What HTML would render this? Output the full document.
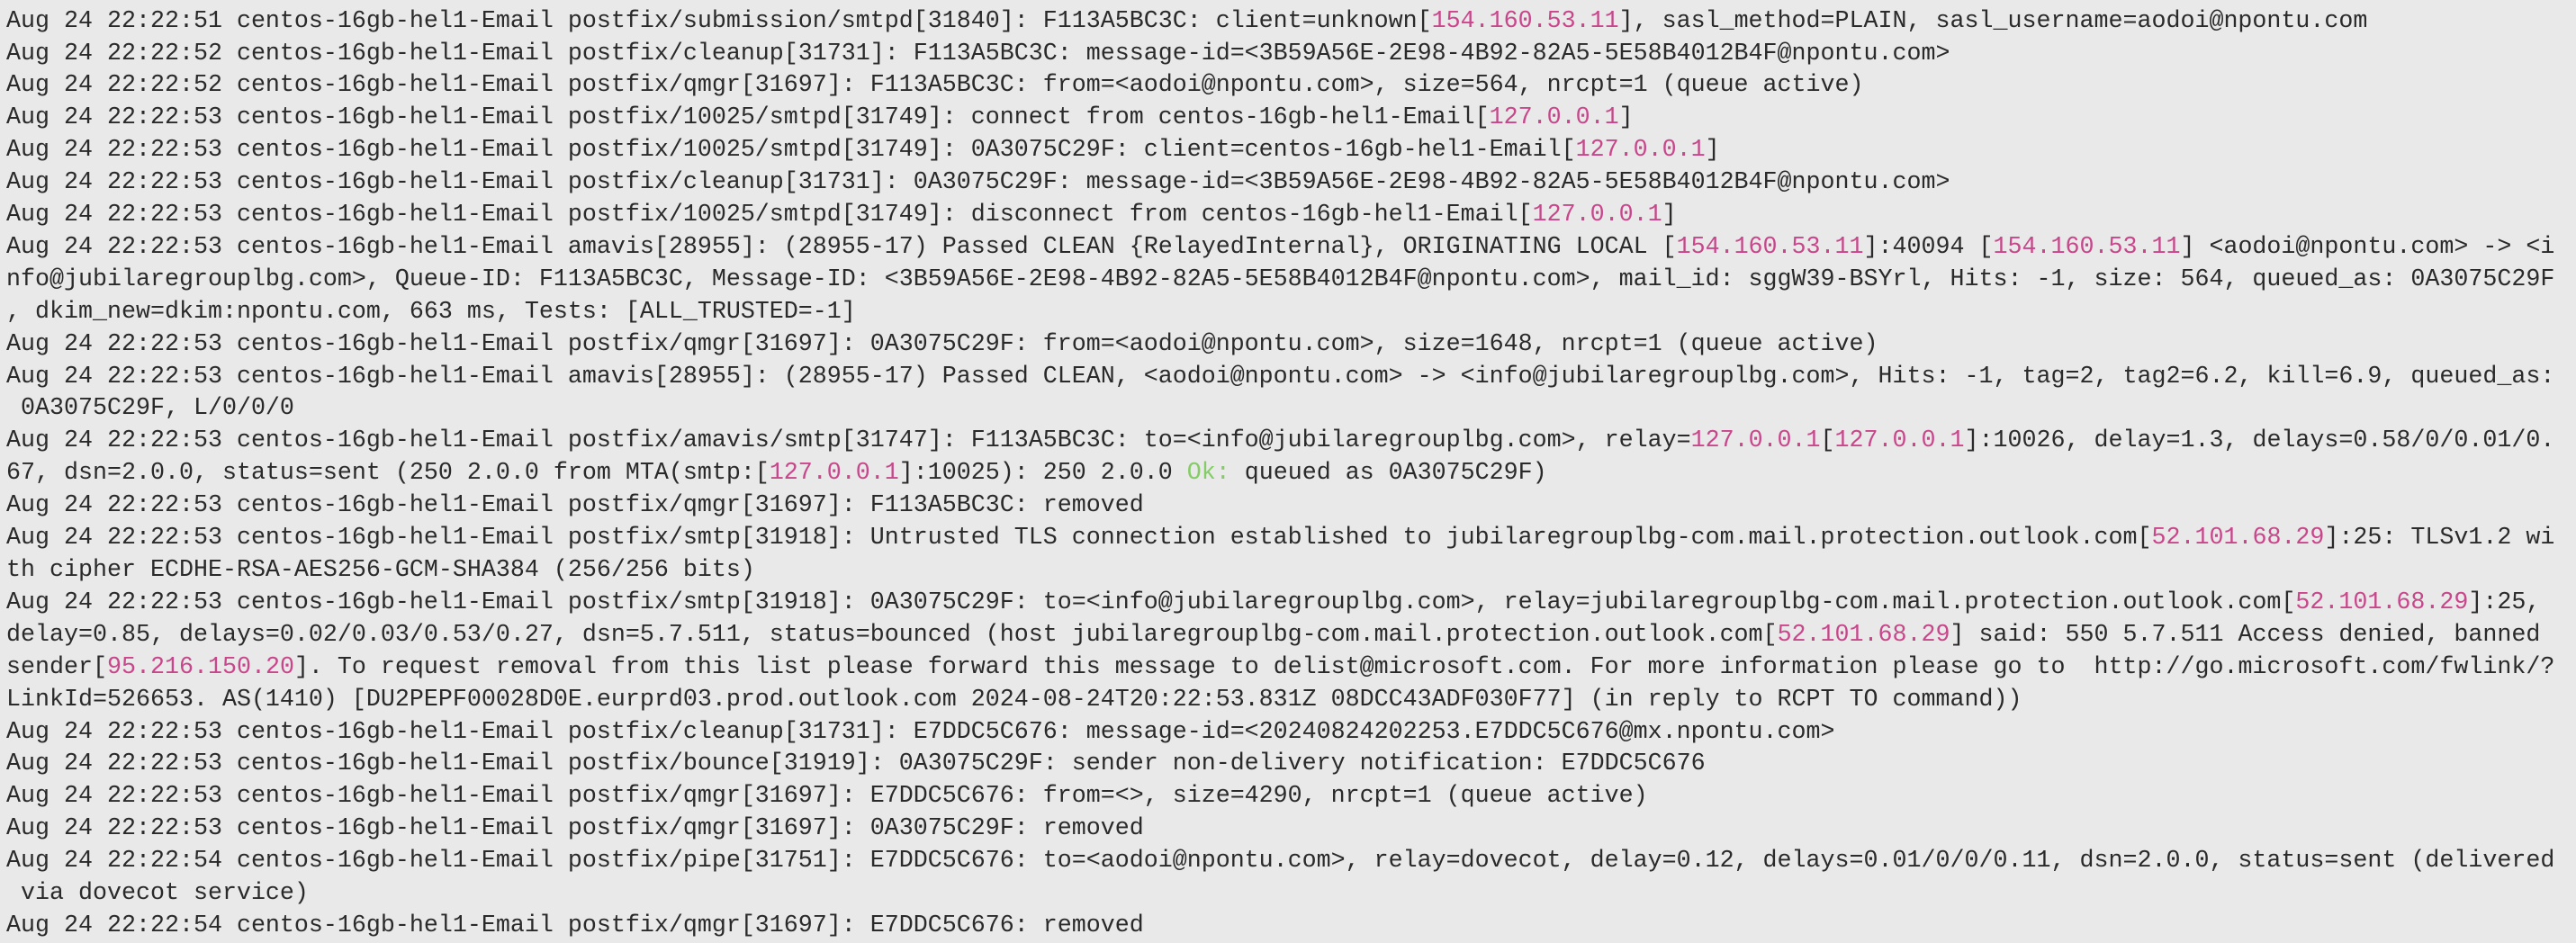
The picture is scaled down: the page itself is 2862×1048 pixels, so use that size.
<!DOCTYPE html>
<html><head><meta charset="utf-8"><style>
html,body{margin:0;padding:0;background:#e9e9e9;width:2862px;height:1048px;overflow:hidden}
pre{margin:0;padding:6.6px 0 0 7px;font-family:"Liberation Mono",monospace;font-size:26.667px;line-height:35.9px;color:#2a2a2a;white-space:pre}
.p{color:#c8468a}.g{color:#85cc68}
</style></head><body><pre>Aug 24 22:22:51 centos-16gb-hel1-Email postfix/submission/smtpd[31840]: F113A5BC3C: client=unknown[<span class="p">154.160.53.11</span>], sasl_method=PLAIN, sasl_username=aodoi@npontu.com
Aug 24 22:22:52 centos-16gb-hel1-Email postfix/cleanup[31731]: F113A5BC3C: message-id=&lt;3B59A56E-2E98-4B92-82A5-5E58B4012B4F@npontu.com&gt;
Aug 24 22:22:52 centos-16gb-hel1-Email postfix/qmgr[31697]: F113A5BC3C: from=&lt;aodoi@npontu.com&gt;, size=564, nrcpt=1 (queue active)
Aug 24 22:22:53 centos-16gb-hel1-Email postfix/10025/smtpd[31749]: connect from centos-16gb-hel1-Email[<span class="p">127.0.0.1</span>]
Aug 24 22:22:53 centos-16gb-hel1-Email postfix/10025/smtpd[31749]: 0A3075C29F: client=centos-16gb-hel1-Email[<span class="p">127.0.0.1</span>]
Aug 24 22:22:53 centos-16gb-hel1-Email postfix/cleanup[31731]: 0A3075C29F: message-id=&lt;3B59A56E-2E98-4B92-82A5-5E58B4012B4F@npontu.com&gt;
Aug 24 22:22:53 centos-16gb-hel1-Email postfix/10025/smtpd[31749]: disconnect from centos-16gb-hel1-Email[<span class="p">127.0.0.1</span>]
Aug 24 22:22:53 centos-16gb-hel1-Email amavis[28955]: (28955-17) Passed CLEAN {RelayedInternal}, ORIGINATING LOCAL [<span class="p">154.160.53.11</span>]:40094 [<span class="p">154.160.53.11</span>] &lt;aodoi@npontu.com&gt; -&gt; &lt;i
nfo@jubilaregrouplbg.com&gt;, Queue-ID: F113A5BC3C, Message-ID: &lt;3B59A56E-2E98-4B92-82A5-5E58B4012B4F@npontu.com&gt;, mail_id: sggW39-BSYrl, Hits: -1, size: 564, queued_as: 0A3075C29F
, dkim_new=dkim:npontu.com, 663 ms, Tests: [ALL_TRUSTED=-1]
Aug 24 22:22:53 centos-16gb-hel1-Email postfix/qmgr[31697]: 0A3075C29F: from=&lt;aodoi@npontu.com&gt;, size=1648, nrcpt=1 (queue active)
Aug 24 22:22:53 centos-16gb-hel1-Email amavis[28955]: (28955-17) Passed CLEAN, &lt;aodoi@npontu.com&gt; -&gt; &lt;info@jubilaregrouplbg.com&gt;, Hits: -1, tag=2, tag2=6.2, kill=6.9, queued_as:
 0A3075C29F, L/0/0/0
Aug 24 22:22:53 centos-16gb-hel1-Email postfix/amavis/smtp[31747]: F113A5BC3C: to=&lt;info@jubilaregrouplbg.com&gt;, relay=<span class="p">127.0.0.1</span>[<span class="p">127.0.0.1</span>]:10026, delay=1.3, delays=0.58/0/0.01/0.
67, dsn=2.0.0, status=sent (250 2.0.0 from MTA(smtp:[<span class="p">127.0.0.1</span>]:10025): 250 2.0.0 <span class="g">Ok:</span> queued as 0A3075C29F)
Aug 24 22:22:53 centos-16gb-hel1-Email postfix/qmgr[31697]: F113A5BC3C: removed
Aug 24 22:22:53 centos-16gb-hel1-Email postfix/smtp[31918]: Untrusted TLS connection established to jubilaregrouplbg-com.mail.protection.outlook.com[<span class="p">52.101.68.29</span>]:25: TLSv1.2 wi
th cipher ECDHE-RSA-AES256-GCM-SHA384 (256/256 bits)
Aug 24 22:22:53 centos-16gb-hel1-Email postfix/smtp[31918]: 0A3075C29F: to=&lt;info@jubilaregrouplbg.com&gt;, relay=jubilaregrouplbg-com.mail.protection.outlook.com[<span class="p">52.101.68.29</span>]:25,
delay=0.85, delays=0.02/0.03/0.53/0.27, dsn=5.7.511, status=bounced (host jubilaregrouplbg-com.mail.protection.outlook.com[<span class="p">52.101.68.29</span>] said: 550 5.7.511 Access denied, banned
sender[<span class="p">95.216.150.20</span>]. To request removal from this list please forward this message to delist@microsoft.com. For more information please go to  http://go.microsoft.com/fwlink/?
LinkId=526653. AS(1410) [DU2PEPF00028D0E.eurprd03.prod.outlook.com 2024-08-24T20:22:53.831Z 08DCC43ADF030F77] (in reply to RCPT TO command))
Aug 24 22:22:53 centos-16gb-hel1-Email postfix/cleanup[31731]: E7DDC5C676: message-id=&lt;20240824202253.E7DDC5C676@mx.npontu.com&gt;
Aug 24 22:22:53 centos-16gb-hel1-Email postfix/bounce[31919]: 0A3075C29F: sender non-delivery notification: E7DDC5C676
Aug 24 22:22:53 centos-16gb-hel1-Email postfix/qmgr[31697]: E7DDC5C676: from=&lt;&gt;, size=4290, nrcpt=1 (queue active)
Aug 24 22:22:53 centos-16gb-hel1-Email postfix/qmgr[31697]: 0A3075C29F: removed
Aug 24 22:22:54 centos-16gb-hel1-Email postfix/pipe[31751]: E7DDC5C676: to=&lt;aodoi@npontu.com&gt;, relay=dovecot, delay=0.12, delays=0.01/0/0/0.11, dsn=2.0.0, status=sent (delivered
 via dovecot service)
Aug 24 22:22:54 centos-16gb-hel1-Email postfix/qmgr[31697]: E7DDC5C676: removed</pre></body></html>
